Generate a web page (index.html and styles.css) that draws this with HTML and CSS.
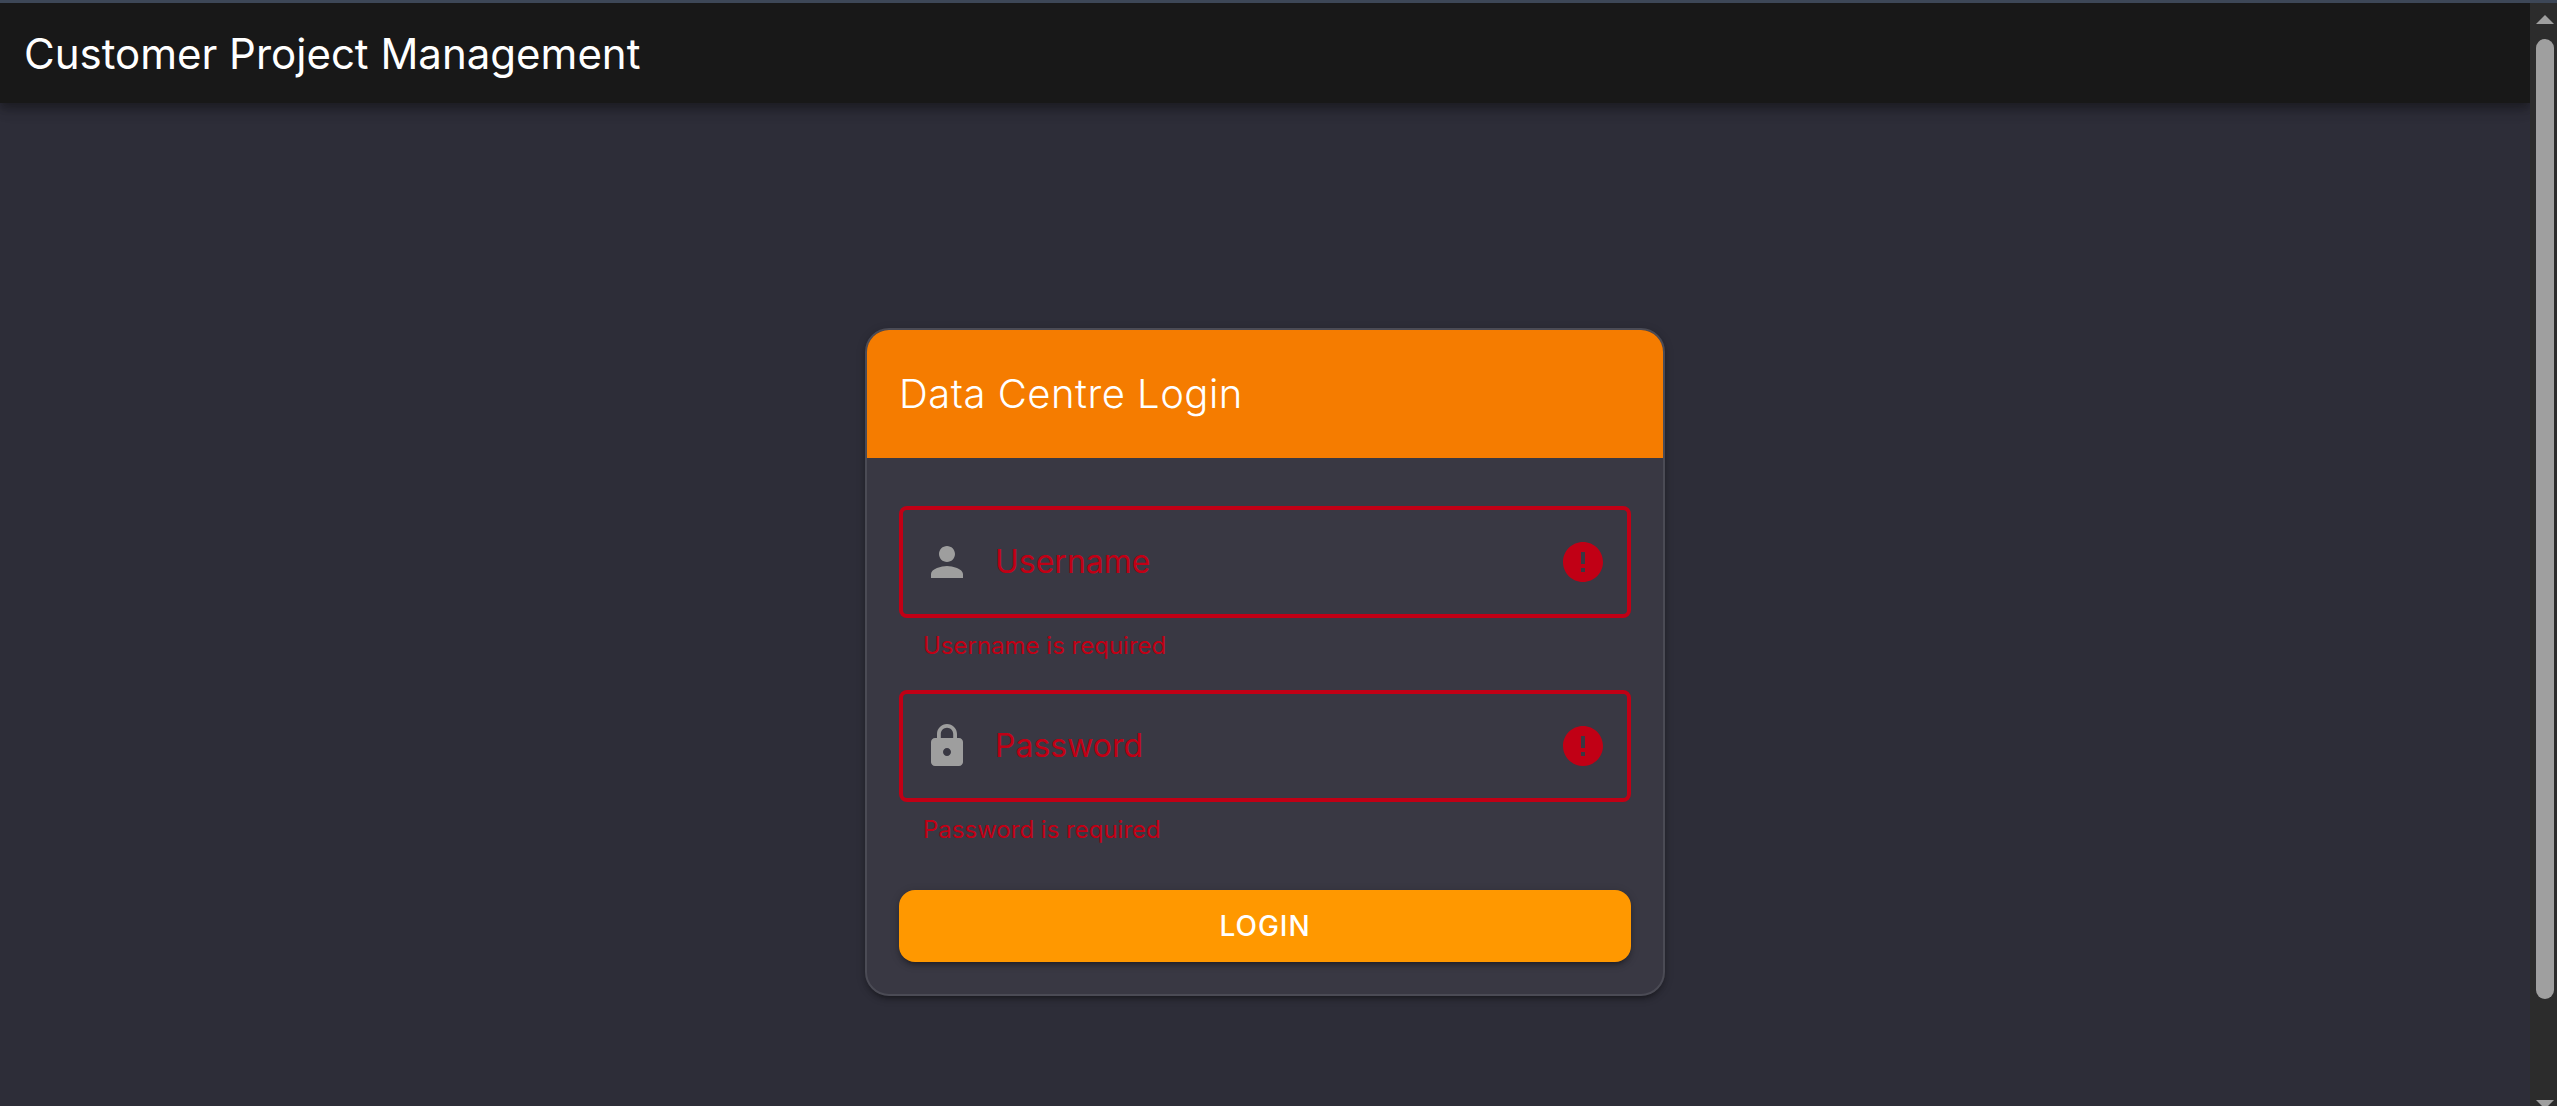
FILE: index.html
```html
<!DOCTYPE html>
<html lang="en">
<head>
<meta charset="utf-8">
<title>Customer Project Management</title>
<link rel="stylesheet" href="styles.css">
</head>
<body>
<div class="shell">
  <div class="view">
    <header class="toolbar">
      <h1 class="toolbar-title">Customer Project Management</h1>
    </header>
    <main class="page">
      <form class="card" novalidate>
        <h2 class="card-title">Data Centre Login</h2>
        <div class="card-body">
          <div class="field">
            <div class="control">
              <svg class="icon" viewBox="0 0 24 24" aria-hidden="true"><path d="M12 12c2.210 0 4-1.790 4-4s-1.790-4-4-4-4 1.790-4 4 1.790 4 4 4zm0 2c-2.670 0-8 1.340-8 4v2h16v-2c0-2.660-5.330-4-8-4z"/></svg>
              <div class="entry">
                <label class="label" for="username">Username</label>
                <input class="input" id="username" type="text" aria-describedby="username-error" aria-invalid="true">
              </div>
              <svg class="icon icon-error" viewBox="0 0 24 24" aria-hidden="true"><path d="M12 2C6.480 2 2 6.480 2 12s4.480 10 10 10 10-4.480 10-10S17.520 2 12 2zm1 15h-2v-2h2v2zm0-4h-2V7h2v6z"/></svg>
            </div>
            <p class="message" id="username-error">Username is required</p>
          </div>
          <div class="field">
            <div class="control">
              <svg class="icon" viewBox="0 0 24 24" aria-hidden="true"><path d="M18 8h-1V6c0-2.760-2.240-5-5-5S7 3.240 7 6v2H6c-1.100 0-2 .9-2 2v10c0 1.100.9 2 2 2h12c1.100 0 2-.9 2-2V10c0-1.100-.9-2-2-2zm-6 9c-1.100 0-2-.9-2-2s.9-2 2-2 2 .9 2 2-.9 2-2 2zm3.100-9H8.900V6c0-1.710 1.390-3.100 3.100-3.100s3.100 1.390 3.100 3.100v2z"/></svg>
              <div class="entry">
                <label class="label" for="password">Password</label>
                <input class="input" id="password" type="password" aria-describedby="password-error" aria-invalid="true">
              </div>
              <svg class="icon icon-error" viewBox="0 0 24 24" aria-hidden="true"><path d="M12 2C6.480 2 2 6.480 2 12s4.480 10 10 10 10-4.480 10-10S17.520 2 12 2zm1 15h-2v-2h2v2zm0-4h-2V7h2v6z"/></svg>
            </div>
            <p class="message" id="password-error">Password is required</p>
          </div>
          <button class="submit" type="submit">LOGIN</button>
        </div>
      </form>
    </main>
  </div>
  <div class="scrollbar" aria-hidden="true">
    <div class="arrow arrow-up"></div>
    <div class="track"><div class="thumb"></div></div>
    <div class="arrow arrow-down"></div>
  </div>
</div>
</body>
</html>
```
FILE: styles.css
```css
* { box-sizing: border-box; }

body {
  margin: 0;
  background: #2d2d38;
  color: #fff;
  font-family: Inter, "Liberation Sans", sans-serif;
}

h1, h2, p { margin: 0; }

.shell {
  display: flex;
  height: 100vh;
  overflow: hidden;
  border-top: 3px solid #3d4757;
}

.view {
  flex: 1;
  min-width: 0;
  overflow: hidden;
}

.toolbar {
  display: flex;
  align-items: center;
  min-height: 100px;
  padding: 2px 24px 0;
  background: #181818;
  box-shadow: 0 4px 8px rgba(0, 0, 0, .2), 0 8px 10px rgba(0, 0, 0, .14), 0 2px 20px rgba(0, 0, 0, .12);
}

.toolbar-title {
  font-size: 42px;
  font-weight: 400;
  line-height: 64px;
}

.page {
  display: flex;
  justify-content: center;
  padding: 225px 24px 24px;
}

.card {
  width: 100%;
  max-width: 800px;
  overflow: hidden;
  border: 2px solid #4b4b55;
  border-radius: 24px;
  background: #393843;
  box-shadow: 0 2px 10px rgba(0, 0, 0, .2), 0 4px 4px rgba(0, 0, 0, .14), 0 6px 2px -4px rgba(0, 0, 0, .12);
}

.card-title {
  padding: 32px;
  background: #f57c00;
  font-size: 40px;
  font-weight: 300;
  line-height: 64px;
  letter-spacing: 0.0125em;
}

.card-body { padding: 48px 32px 32px; }

.control {
  display: flex;
  align-items: center;
  gap: 24px;
  height: 112px;
  padding: 0 20px;
  border: 4px solid #c10015;
  border-radius: 8px;
}

.icon {
  flex: none;
  width: 48px;
  height: 48px;
  fill: #9e9e9e;
}

.icon-error { fill: #c10015; }

.entry {
  display: grid;
  flex: 1;
  align-items: center;
}

.label, .input { grid-area: 1 / 1; }

.label {
  color: #c10015;
  font-size: 32px;
  line-height: 40px;
}

.input {
  width: 100%;
  height: 96px;
  padding: 0;
  border: 0;
  outline: 0;
  background: transparent;
  color: #fff;
  font: inherit;
  font-size: 32px;
}

.message {
  height: 72px;
  padding: 16px 24px;
  color: #c10015;
  font-size: 24px;
  line-height: 24px;
}

.submit {
  display: block;
  width: 100%;
  height: 72px;
  margin-top: 16px;
  border: 0;
  border-radius: 16px;
  background: #ff9800;
  color: #fff;
  font: 500 28px/48px Inter, "Liberation Sans", sans-serif;
  letter-spacing: 1px;
  box-shadow: 0 2px 10px rgba(0, 0, 0, .2), 0 4px 4px rgba(0, 0, 0, .14), 0 6px 2px -4px rgba(0, 0, 0, .12);
}

.scrollbar {
  display: flex;
  flex-direction: column;
  align-items: center;
  width: 27px;
  padding: 12px 0 0 3px;
  background: #2c2c2c;
}

.arrow {
  flex: none;
  width: 18px;
  height: 9px;
  background: #9f9f9f;
}

.arrow-up { clip-path: polygon(50% 0, 100% 100%, 0 100%); }

.arrow-down { clip-path: polygon(0 0, 100% 0, 50% 100%); margin-bottom: -3px; }

.track {
  flex: 1;
  width: 18px;
  padding: 15px 0 0;
}

.thumb {
  height: 90.5%;
  border-radius: 9px;
  background: #9f9f9f;
}
```
